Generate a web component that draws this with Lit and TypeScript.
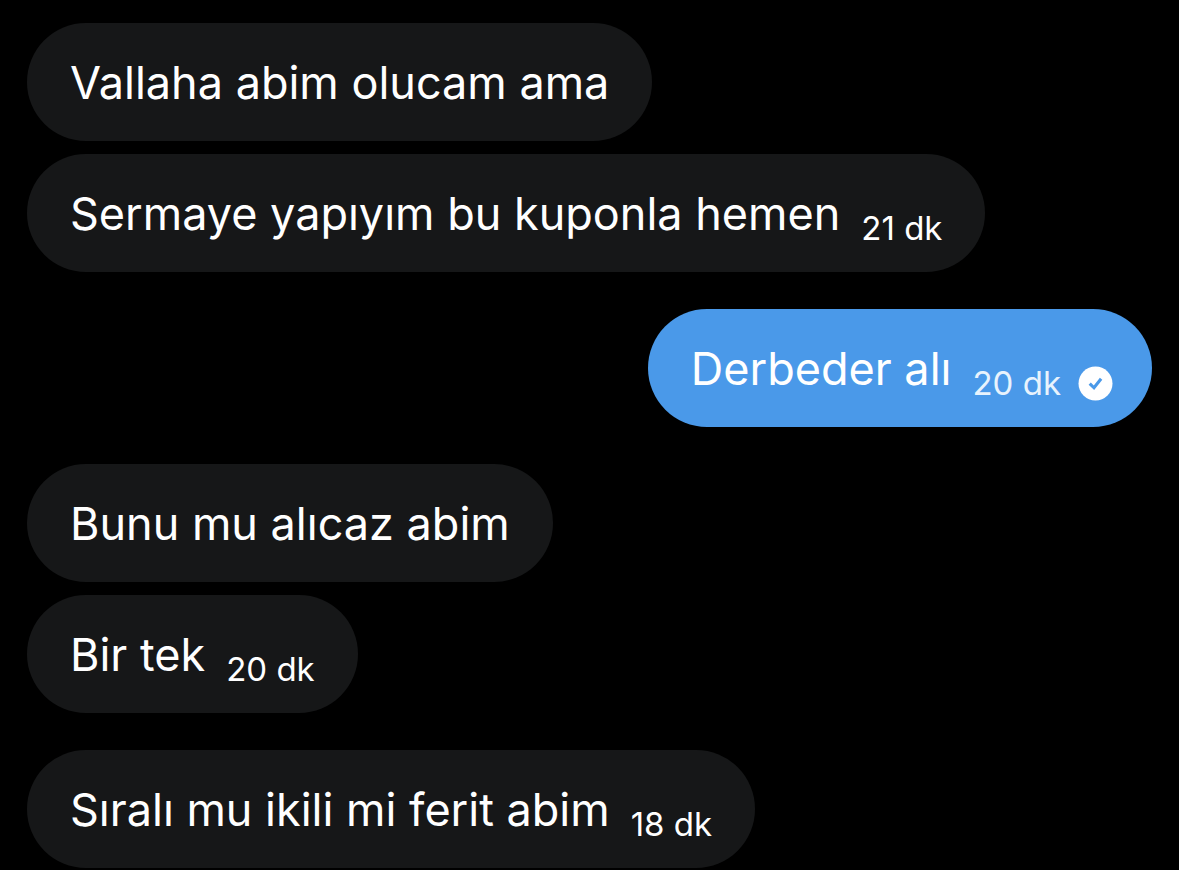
import { LitElement, html, css, nothing } from "lit";
import { customElement, property } from "lit/decorators.js";

interface Message {
  text: string;
  time?: string;
  own?: boolean;
}

const messages: Message[] = [
  { text: "Vallaha abim olucam ama" },
  { text: "Sermaye yapıyım bu kuponla hemen", time: "21 dk" },
  { text: "Derbeder alı", time: "20 dk", own: true },
  { text: "Bunu mu alıcaz abim" },
  { text: "Bir tek", time: "20 dk" },
  { text: "Sıralı mu ikili mi ferit abim", time: "18 dk" },
];

@customElement("message-bubble")
export class MessageBubble extends LitElement {
  @property({ attribute: false }) message!: Message;

  static styles = css`
    :host {
      display: flex;
    }
    .bubble {
      display: flex;
      align-items: flex-end;
      column-gap: 21px;
      padding: 28px 43px 26px;
      border-radius: 60px;
      background: #161718;
      color: #fff;
    }
    .own {
      margin-left: auto;
      padding-right: 39px;
      background: #4a99e9;
    }
    .text {
      margin: 0;
      font-size: 45px;
      line-height: 64px;
    }
    .meta {
      display: flex;
      align-items: center;
      column-gap: 17px;
      font-size: 33px;
      line-height: 36px;
      white-space: nowrap;
    }
    .own .meta {
      color: #e8f3fd;
    }
    .sent {
      display: block;
      width: 35px;
      height: 35px;
    }
  `;

  render() {
    const { text, time, own } = this.message;
    return html`<div class="bubble ${own ? "own" : ""}">
      <p class="text">${text}</p>
      ${time
        ? html`<div class="meta">
            <time>${time}</time>
            ${own
              ? html`<svg class="sent" viewBox="0 0 35 35" role="img" aria-label="Gönderildi">
                  <circle cx="17.5" cy="17.5" r="17" fill="#fff" />
                  <path d="M11.7 17.6l4.3 4.2 7.1-9" fill="none" stroke="#4a99e9" stroke-width="3.1" />
                </svg>`
              : nothing}
          </div>`
        : nothing}
    </div>`;
  }
}

@customElement("app-root")
export class AppRoot extends LitElement {
  static styles = css`
    :host {
      display: block;
      box-sizing: border-box;
      height: 100vh;
      overflow: hidden;
      padding: 23px 27px 0;
      background: #000;
      font-family: Inter, "Noto Sans", sans-serif;
    }
    .thread {
      display: flex;
      flex-direction: column;
      row-gap: 13px;
      margin: 0;
      padding: 0;
      list-style: none;
    }
    .last {
      padding-bottom: 24px;
    }
  `;

  render() {
    return html`<ul class="thread">
      ${messages.map(
        (message) => html`<li class=${message.time ? "last" : ""}>
          <message-bubble .message=${message}></message-bubble>
        </li>`
      )}
    </ul>`;
  }
}
